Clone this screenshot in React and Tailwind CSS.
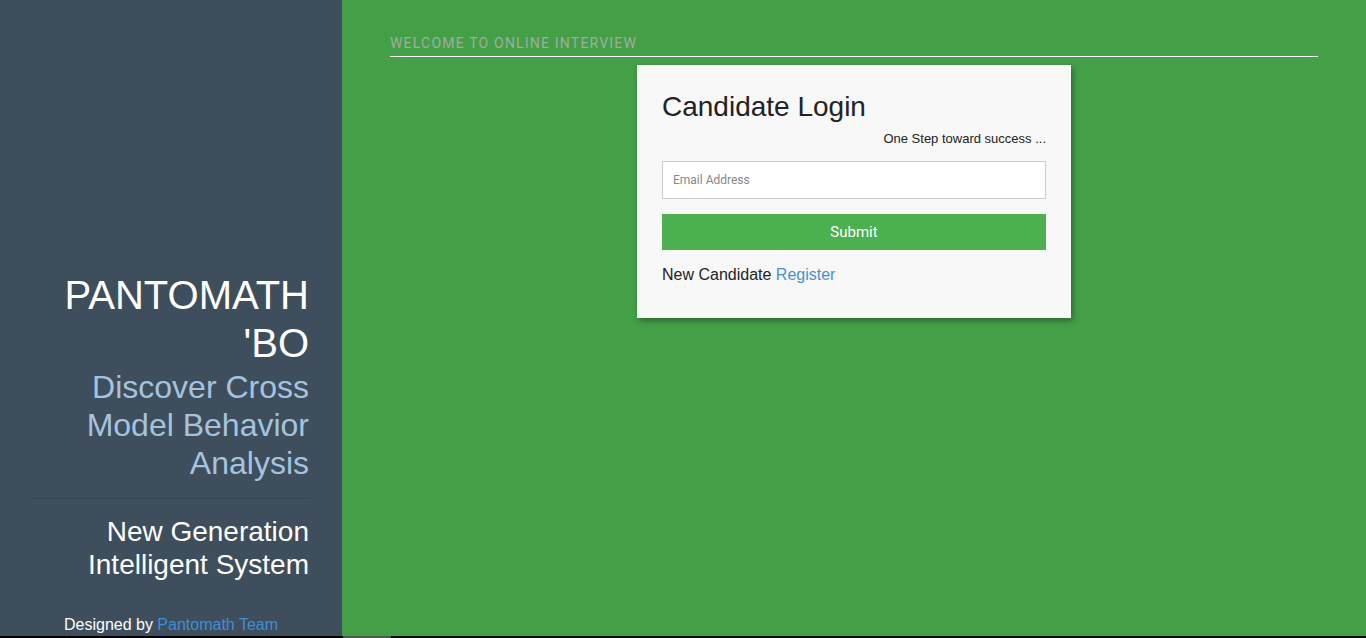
import React from "react";

export default function App() {
  return (
    <div className="w-[1366px] h-[638px] flex flex-col overflow-hidden" style={{ fontFamily: '"Liberation Sans", Arial, sans-serif' }}>
      <div className="flex flex-1 min-h-0">
        <aside className="w-[342px] shrink-0 bg-[#3e4e5c] flex flex-col pt-[271px]">
          <div className="pr-[33px] text-right">
            <h1 className="text-[40px] leading-[48px] text-white">PANTOMATH<br />'BO</h1>
            <p className="text-[32px] leading-[38px] text-[#a5c3de] pl-[60px] mt-[1px]">Discover Cross Model Behavior Analysis</p>
          </div>
          <div className="ml-[32px] mr-[32px] mt-[16px] h-px bg-[#354553]" />
          <p className="pr-[33px] text-right text-[28px] leading-[33px] text-white mt-[16px]">New Generation<br />Intelligent System</p>
          <p className="text-center text-[16px] leading-[20px] text-white mt-[34px]">
            Designed by <span className="text-[#3d8fd9]">Pantomath Team</span>
          </p>
        </aside>
        <main className="flex-1 bg-[#43a047] px-[48px] pt-[34px]">
          <div className="border-b border-white pb-[4px]">
            <p className="text-[14px] leading-[18px] tracking-[1.2px] text-[#a2aca2] uppercase" style={{ fontFamily: 'Roboto, sans-serif' }}>Welcome to Online Interview</p>
          </div>
          <div className="flex justify-center mt-[8px]">
            <div className="w-[434px] bg-[#f8f8f8] shadow-[2px_3px_6px_rgba(0,0,0,0.35)] px-[25px] pt-[26px] pb-[32px]">
              <h2 className="text-[28px] leading-[31px] text-[#222]">Candidate Login</h2>
              <p className="text-right text-[13px] leading-[18px] text-[#222] mt-[8px]">One Step toward success ...</p>
              <div className="mt-[13px] h-[38px] border border-[#cccccc] bg-white flex items-center px-[10px]">
                <span className="text-[12px] text-[#888]" style={{ fontFamily: 'Roboto, sans-serif' }}>Email Address</span>
              </div>
              <button className="mt-[15px] w-full h-[36px] bg-[#4caf50] text-white text-[15px] font-normal" style={{ fontFamily: 'Roboto, sans-serif' }}>Submit</button>
              <p className="mt-[14px] text-[16px] leading-[22px] text-[#222]">
                New Candidate <span className="text-[#4a90d0]">Register</span>
              </p>
            </div>
          </div>
        </main>
      </div>
      <div className="h-[2px] flex shrink-0 bg-black">
        <div className="w-[343px]" />
        <div className="w-[48px] bg-[#555]" />
      </div>
    </div>
  );
}
